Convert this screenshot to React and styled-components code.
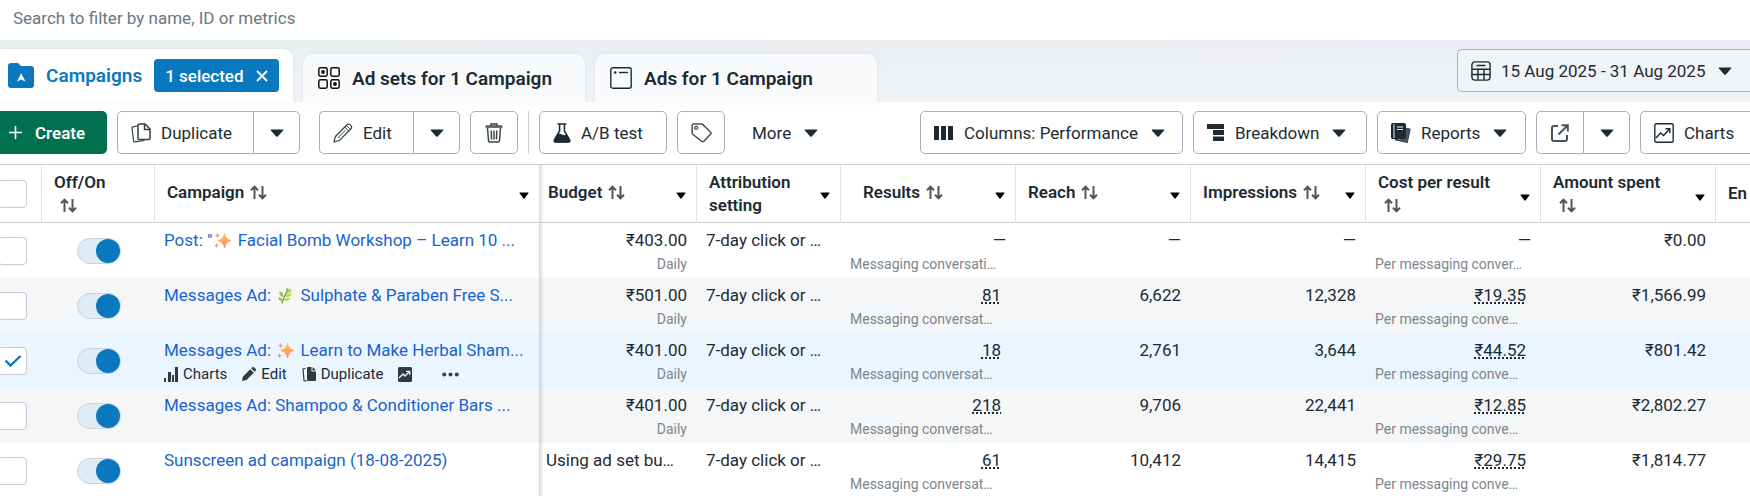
import React, { useState } from "react";
import styled, { createGlobalStyle } from "styled-components";

const GlobalStyle = createGlobalStyle`
  html, body {
    margin: 0;
    padding: 0;
    background-color: #fff;
    color: #1c2b33;
    font-family: Roboto, "Liberation Sans", sans-serif;
    font-size: 17px;
    overflow: hidden;
  }

  *, *::before {
    box-sizing: border-box;
  }

  button, input {
    font: inherit;
    color: inherit;
    margin: 0;
  }

  svg {
    display: block;
    flex: none;
  }
`;

const Page = styled.main`
  margin-left: -2px;
  min-height: 100vh;
  background-color: #fff;
`;

const SearchInput = styled.input`
  display: block;
  width: 100%;
  height: 40px;
  padding: 0 15px 4px;
  border: 0;
  outline: 0;
  background: #fff;

  &::placeholder {
    color: #6b7780;
    opacity: 1;
  }
`;

const TabStrip = styled.header`
  display: flex;
  align-items: flex-end;
  gap: 10px;
  height: 62px;
  background:
    linear-gradient(to bottom, rgba(239, 243, 246, 0), #eff3f6 60%),
    linear-gradient(to right, #e9eef1 20%, #ecedf1 60%, #e9ecf5);
`;

const Tab = styled.div`
  display: flex;
  align-items: center;
  flex: none;
  width: ${(props) => (props.$active ? 295 : 282)}px;
  height: ${(props) => (props.$active ? 53 : 48)}px;
  padding: ${(props) => (props.$active ? "0 10px" : "0 15px")};
  gap: 12px;
  border-radius: ${(props) => (props.$active ? "0 10px 0 0" : "10px 10px 0 0")};
  background-color: ${(props) => (props.$active ? "#fff" : "#f9fafc")};
  color: ${(props) => (props.$active ? "#0a78be" : "#1c2b33")};
  box-shadow: 0 0 6px rgba(28, 43, 51, 0.05);
`;

const TabLink = styled.a`
  display: flex;
  align-items: center;
  gap: 12px;
  color: inherit;
  font-size: 19px;
  font-weight: 600;
  text-decoration: none;
  white-space: nowrap;
`;

const SelectedChip = styled.button`
  display: flex;
  align-items: center;
  justify-content: space-between;
  width: 125px;
  height: 33px;
  padding: 0 11px;
  border: 0;
  border-radius: 4px;
  background-color: #0a78be;
  color: #fff;
  font-weight: 500;
  white-space: nowrap;
`;

const DateButton = styled.button`
  display: flex;
  align-items: center;
  align-self: flex-start;
  flex: none;
  gap: 10px;
  width: 293px;
  height: 43px;
  margin: 9px 0 0 auto;
  padding: 0 13px;
  border: 1px solid #a5b1bc;
  border-right: 0;
  border-radius: 5px 0 0 5px;
  background-color: #f1f4f7;
  font-weight: 450;
  white-space: nowrap;
`;

const Toolbar = styled.div`
  display: flex;
  align-items: flex-start;
  gap: 10px;
  height: 62px;
  padding-top: 9px;
`;

const RightTools = styled.div`
  display: flex;
  gap: 10px;
  margin-left: auto;
`;

const ToolButton = styled.button`
  display: flex;
  align-items: center;
  justify-content: ${(props) => (props.$iconOnly ? "center" : "flex-start")};
  flex: none;
  gap: 10px;
  width: ${(props) => props.$width}px;
  height: 43px;
  padding: 0 ${(props) => (props.$iconOnly ? 0 : 13)}px;
  border: 1px solid ${(props) => (props.$plain ? "transparent" : "#a5b1bc")};
  border-radius: 5px;
  background-color: #fff;
  font-weight: 450;
  white-space: nowrap;
`;

const CreateButton = styled(ToolButton)`
  padding-left: 10px;
  border: 0;
  border-radius: 0 5px 5px 0;
  background-color: #00704f;
  color: #fff;
  font-weight: 600;
  gap: 12px;
`;

const EdgeButton = styled(ToolButton)`
  border-right: 0;
  border-radius: 5px 0 0 5px;
`;

const SplitButton = styled.div`
  display: flex;
  margin-right: ${(props) => (props.$spaced ? 9 : 0)}px;

  ${ToolButton}:first-child {
    border-radius: 5px 0 0 5px;
    border-right: 0;
  }

  ${ToolButton}:last-child {
    border-radius: 0 5px 5px 0;
  }
`;

const Separator = styled.span`
  width: 1px;
  height: 43px;
  background-color: #cbd2d9;
`;

const CaretSlot = styled.span`
  margin-left: 3px;
`;

const Table = styled.table`
  width: 100%;
  table-layout: fixed;
  border-collapse: separate;
  border-spacing: 0;
`;

const Col = styled.col`
  width: ${(props) => (props.$width ? `${props.$width}px` : "auto")};
`;

const HeadCell = styled.th`
  height: 59px;
  padding: 0 10px 0 ${(props) => (props.$indent ? 22 : props.$shadow ? 8 : 12)}px;
  border: 0 solid #cdcfd2;
  border-width: 1px 1px 1px 0;
  border-right-color: #dfe1e4;
  background: ${(props) =>
    props.$shadow ? "linear-gradient(to right, #dcdee0, #fff 4px)" : "#fff"};
  font-weight: 600;
  line-height: 23px;
  text-align: left;
  vertical-align: middle;
  white-space: nowrap;

  &:last-child {
    border-right: 0;
  }
`;

const ControlHead = styled(HeadCell)`
  padding: 0;
`;

const HeadInner = styled.div`
  display: flex;
  align-items: center;
  justify-content: space-between;
`;

const HeadLabel = styled.span`
  display: flex;
  flex-direction: ${(props) => (props.$stacked ? "column" : "row")};
  align-items: ${(props) => (props.$stacked ? "flex-start" : "center")};
  column-gap: 6px;
  padding-bottom: ${(props) => (props.$stacked ? 0 : 2)}px;
`;

const SortSlot = styled.span`
  display: flex;
  align-items: center;
  height: 23px;
  padding-left: ${(props) => (props.$stacked ? 6 : 0)}px;
`;

const HeadCaret = styled.button`
  padding: ${(props) => (props.$low ? 7 : 3)}px 0 0;
  border: 0;
  background: none;
`;

const Row = styled.tr`
  background-color: ${(props) =>
    props.$selected ? "#ebf5ff" : props.$striped ? "#f4f6f8" : "#fff"};
`;

const Cell = styled.td`
  height: 55px;
  padding: 6px 10px 0 ${(props) => props.$left || 9}px;
  overflow: hidden;
  text-align: ${(props) => props.$align || "left"};
  vertical-align: top;
  white-space: nowrap;
  line-height: 22px;
`;

const ControlCell = styled(Cell)`
  padding: 0 0 0 ${(props) => props.$left || 0}px;
  vertical-align: middle;
`;

const CampaignCell = styled(Cell)`
  border-right: 1px solid #d3d6d9;
`;

const BudgetCell = styled(Cell)`
  background: linear-gradient(to right, rgba(28, 43, 51, 0.14), rgba(28, 43, 51, 0) 4px);
`;

const SubText = styled.div`
  margin-top: 3px;
  color: #7b868d;
  font-size: 14px;
  line-height: 20px;
  text-align: ${(props) => props.$align || "left"};
`;

const Metric = styled.span`
  padding-right: 5px;
  text-decoration: underline dotted 2px;
  text-decoration-skip-ink: none;
  text-underline-offset: 1px;
`;

const CampaignLink = styled.a`
  display: flex;
  align-items: center;
  color: #1763cf;
  text-decoration: none;
  white-space: pre;
`;

const EmojiSlot = styled.span`
  display: flex;
  justify-content: center;
  width: 17px;
  margin: 0 2px;
`;

const RowActions = styled.div`
  display: flex;
  align-items: center;
  gap: 15px;
  height: 20px;
  margin-top: 3px;
`;

const RowAction = styled.button`
  display: flex;
  align-items: center;
  gap: 5px;
  padding: 0;
  border: 0;
  background: none;
  font-size: 15px;
  line-height: 20px;
`;

const MoreAction = styled(RowAction)`
  padding-left: 15px;
`;

const CheckLabel = styled.label`
  display: grid;
  width: 29px;
  height: 28px;

  > * {
    grid-area: 1 / 1;
    place-self: center;
  }

  svg {
    pointer-events: none;
    opacity: ${(props) => (props.$checked ? 1 : 0)};
  }
`;

const CheckInput = styled.input`
  appearance: none;
  width: 29px;
  height: 28px;
  border: 1px solid #c3cbd5;
  border-radius: 4px;
  background-color: #fff;
`;

const Switch = styled.input`
  appearance: none;
  display: flex;
  justify-content: flex-end;
  width: 44px;
  height: 26px;
  border: 1px solid #c8d3dc;
  border-radius: 13px;
  background-color: #dfecf6;

  &:not(:checked) {
    justify-content: flex-start;
    background-color: #eef0f2;
  }

  &::before {
    content: "";
    width: 24px;
    height: 24px;
    border-radius: 50%;
    background-color: #0a78be;
  }
`;

/* icons */

const Caret = ({ small }) => (
  <svg width={small ? 10 : 14} height={small ? 7 : 8} viewBox="0 0 14 8" preserveAspectRatio="none">
    <path d="M1.3.5h11.4q1 0 .4.9L8 7.2q-1 1-2 0L.9 1.4Q.3.5 1.3.5Z" fill={small ? "#000" : "#1c2b33"} />
  </svg>
);

const SortIcon = () => (
  <svg width="17" height="15" viewBox="0 0 17 15" fill="none" stroke="#555" strokeWidth="2">
    <path d="M4.5 14V2M1 5.2l3.5-3.5L8 5.2M12.5 1v12M9 9.8l3.5 3.5L16 9.8" />
  </svg>
);

const FolderIcon = () => (
  <svg width="26" height="25" viewBox="0 0 26 25">
    <path d="M3 0h7l3 3h10q3 0 3 3v16q0 3-3 3H3q-3 0-3-3V3q0-3 3-3Z" fill="#0a78be" />
    <path d="M13.2 10.3 17.5 18.4l-4.3-2-4.3 2Z" fill="#fff" />
  </svg>
);

const AdSetsIcon = () => (
  <svg width="22" height="22" viewBox="0 0 22 22" fill="none" stroke="#111" strokeWidth="1.5">
    <rect x=".8" y=".8" width="8.4" height="8.4" rx="1.6" />
    <rect x="12.8" y=".8" width="8.4" height="8.4" rx="1.6" />
    <rect x=".8" y="12.8" width="8.4" height="8.4" rx="1.6" />
    <rect x="12.8" y="12.8" width="8.4" height="8.4" rx="1.6" />
    <circle cx="5" cy="5" r="1.9" fill="#111" stroke="none" />
    <circle cx="17" cy="17" r="1.9" fill="#111" stroke="none" />
  </svg>
);

const AdIcon = () => (
  <svg width="22" height="22" viewBox="0 0 22 22" fill="none" stroke="#1c2b33" strokeWidth="1.4">
    <rect x=".8" y=".8" width="20.4" height="20.4" rx="2" />
    <path d="M9 5.5h9" />
    <circle cx="5.2" cy="5.5" r="1.3" fill="#1c2b33" stroke="none" />
  </svg>
);

const CloseIcon = () => (
  <svg width="12" height="12" viewBox="0 0 12 12" stroke="#fff" strokeWidth="1.8">
    <path d="M1 1l10 10M11 1 1 11" />
  </svg>
);

const CalendarIcon = () => (
  <svg width="20" height="20" viewBox="0 0 20 20" fill="none" stroke="#1c2b33" strokeWidth="1.4">
    <rect x=".9" y=".9" width="18.2" height="18.2" rx="3" />
    <path d="M5.5 4.5h9M1 8.2h18M1 13.5h18M7 8.2V19M13 8.2V19" />
  </svg>
);

const PlusIcon = () => (
  <svg width="15" height="15" viewBox="0 0 15 15" stroke="#fff" strokeWidth="1.6">
    <path d="M7.5 1v13M1 7.5h13" />
  </svg>
);

const DuplicateIcon = () => (
  <svg width="20" height="20" viewBox="0 0 20 20" fill="none" stroke="#2f3d45" strokeWidth="1.5" strokeLinejoin="round">
    <path d="M8.5 1H14l5 5v9.5q0 1-1 1H8q-1 0-1-1V2q0-1 1.5-1Z" />
    <path d="M13.5 1.2V6.5H19" />
    <path d="M6.5 3 2 3.8Q.9 4 1 5l1.6 12.8q.2 1.1 1.3 1L13.5 17.5" strokeWidth="1.2" />
  </svg>
);

const PencilIcon = () => (
  <svg width="20" height="20" viewBox="0 0 20 20" fill="none" stroke="#3d4a51" strokeWidth="1.3" strokeLinejoin="round">
    <path d="m1 19 1.4-5.5L13.8 2q1.9-1.7 3.8.1t.2 3.9L6.5 17.4Z" />
    <path d="m11.8 4 4.2 4.2M13.5 2.4l4.2 4.2M5 14.8 12.5 7.3" strokeWidth="1" />
  </svg>
);

const TrashIcon = () => (
  <svg width="18" height="20" viewBox="0 0 18 20" fill="none" stroke="#3a464d" strokeWidth="1.5">
    <path d="M6 2.8V1h6v1.8M.5 4h17M2.5 5l1 12.5q.1 1.5 1.5 1.5h8q1.4 0 1.5-1.5L15.5 5" />
    <path d="M.8 2.8h16.4" strokeWidth="1" />
    <path d="M6.2 7.5l.3 9M9 7.5v9M11.8 7.5l-.3 9" />
  </svg>
);

const FlaskIcon = () => (
  <svg width="18" height="20" viewBox="0 0 18 20">
    <path d="M4.5 1h9M6.6 1v7L1.5 16.5q-1.1 2.5 1.3 2.5h12.4q2.4 0 1.3-2.5L11.4 8V1" fill="none" stroke="#1c2b33" strokeWidth="1.5" />
    <path d="M4.6 11.2q2.2-1.2 4.4.2t4.6.2L17 17q.8 2.5-1.5 2.5h-13Q.2 19.5 1 17Z" fill="#1c2b33" />
  </svg>
);

const TagIcon = () => (
  <svg width="21" height="20" viewBox="0 0 21 20" fill="none" stroke="#46525a" strokeWidth="1.5" strokeLinejoin="round">
    <path d="M2.5 1h8q.8 0 1.4.6l7.6 7.4q1.1 1.1 0 2.2l-6.6 7.1q-1 1-2.1 0L2 11.5q-.8-.7-.8-1.7V2.3Q1.2 1 2.5 1Z" />
    <circle cx="5.2" cy="4.8" r="1.5" strokeWidth="1.3" />
  </svg>
);

const ColumnsIcon = () => (
  <svg width="20" height="16" viewBox="0 0 20 16" fill="#1c2b33">
    <path d="M0 1h5v14H0zM7 1h5v14H7zM14 1h5v14h-5z" />
  </svg>
);

const BreakdownIcon = () => (
  <svg width="18" height="18" viewBox="0 0 18 18" fill="#1c2b33">
    <path d="M0 0h17v5H0zM6 6h11v5H6zM6 12.5h11V17H6z" />
  </svg>
);

const ReportsIcon = () => (
  <svg width="20" height="20" viewBox="0 0 20 20">
    <path d="M2.5.5V16M4 16.5 16 19l2.8-12.5-3-.9" fill="none" stroke="#1c2b33" strokeWidth="1.6" />
    <path d="M14 4.5 19 6l-2.6 13.5-8-2Z" fill="#4b575e" />
    <path d="M1.5 0H13q2 0 2 2v12q0 2-2 2H1.5Q0 16 0 14V2Q0 0 1.5 0Z" fill="#1c2b33" />
    <path d="M3 1v14" stroke="#fff" strokeWidth=".9" />
    <path d="M6 4h6M6 6.5h6" stroke="#fff" strokeWidth="1.2" />
  </svg>
);

const ExportIcon = () => (
  <svg width="18" height="18" viewBox="0 0 18 18" fill="none" stroke="#46525a" strokeWidth="2">
    <path d="M7 2H3Q1 2 1 4v11q0 2 2 2h11q2 0 2-2v-4" />
    <path d="M10.5 1.2h6.3v6.3M16.5 1.5l-9 9" />
  </svg>
);

const ChartIcon = () => (
  <svg width="20" height="20" viewBox="0 0 20 20" fill="none" stroke="#1c2b33" strokeWidth="1.4">
    <rect x=".8" y=".8" width="18.4" height="18.4" rx="1.5" />
    <path d="m2 15 4.500-5 3 2.500L15.500 6M11.500 5.800h4.300V10" />
  </svg>
);

const CheckIcon = () => (
  <svg width="18" height="14" viewBox="0 0 18 14" fill="none" stroke="#0a78be" strokeWidth="2.4">
    <path d="m1.5 6.5 5 5L16.5 2" />
  </svg>
);

const BarsIcon = () => (
  <svg width="14" height="15" viewBox="0 0 14 15" fill="#33393e">
    <path d="M0 11h2v4H0zM4 5h3v10H4zM8 8h2v7H8zM11 0h3v15h-3z" />
  </svg>
);

const SolidPencilIcon = () => (
  <svg width="14" height="14" viewBox="0 0 14 14" fill="#33393e">
    <path d="m0 14 1-4.500L8.300 2.200 11.800 5.700 4.500 13ZM9.200 1.300 10 .5q1.200-1 2.300 0l1.200 1.200q1 1.100 0 2.300l-.8.800Z" />
  </svg>
);

const SolidDuplicateIcon = () => (
  <svg width="14" height="15" viewBox="0 0 14 15">
    <path d="M3.500 1.500 1 2l1 11.500 2.500.7" fill="none" stroke="#33393e" strokeWidth="1.2" />
    <path d="M6 0h3.500v4.500H14V13q0 1-1 1H6q-1 0-1-1V1q0-1 1-1ZM10.500 0 14 3.500h-3.500Z" fill="#33393e" />
  </svg>
);

const SolidChartIcon = () => (
  <svg width="14" height="15" viewBox="0 0 14 15">
    <rect width="14" height="15" rx="1.5" fill="#33393e" />
    <path d="m1 11 4-4 2 2 4.500-4.500M8 4.300h3.700V8" fill="none" stroke="#ebf5ff" strokeWidth="1.3" />
  </svg>
);

const DotsIcon = () => (
  <svg width="17" height="5" viewBox="0 0 17 5" fill="#33434d">
    <circle cx="2.2" cy="2.5" r="2" />
    <circle cx="8.5" cy="2.5" r="2" />
    <circle cx="14.8" cy="2.5" r="2" />
  </svg>
);

const SparklesIcon = () => (
  <svg width="17" height="17" viewBox="0 0 17 17" role="img" aria-label="✨">
    <defs>
      <linearGradient id="spark" x1="0" y1="0" x2="0" y2="1">
        <stop offset="0" stopColor="#ffc24a" />
        <stop offset="1" stopColor="#ff8a6b" />
      </linearGradient>
    </defs>
    <path d="M10.500 1.500q.9 6 6.500 7-5.600 1-6.500 7.500-.9-6.500-6.500-7.500 5.600-1 6.500-7Z" fill="url(#spark)" stroke="url(#spark)" />
    <path d="M3.500.5q.3 2.500 2.500 3-2.200.5-2.500 3Q3.200 4 1 3.500q2.200-.5 2.500-3ZM2.500 11q.3 2 2.300 2.500-2 .5-2.300 2.500-.3-2-2.300-2.500Q2.200 13 2.500 11Z" fill="#fb9a5c" />
  </svg>
);

const HerbIcon = () => (
  <svg width="15" height="17" viewBox="0 0 15 17" role="img" aria-label="🌿">
    <path d="M4 16.500Q5.500 9 10.500 3" fill="none" stroke="#6d8f35" strokeWidth="1.2" />
    <path d="M8.500 6Q7 3 9.500.5q2.500 2-1 5.500ZM5 10Q1 9 1.500 4.500q4.500.5 3.500 5.500ZM4.500 14Q1 14.500.2 10.500q4-.5 4.300 3.500Z" fill="#8cc152" />
    <path d="M9 6.500q0-4 4.500-4.500.5 4-4.500 4.500ZM7.500 10q.5-4 6.500-3.500-1.500 4-6.500 3.500ZM5.500 13.500q2-3.500 7-2-2 3.500-7 2Z" fill="#b5d645" />
  </svg>
);

const columns = [
  { label: "Campaign", sort: true },
  { label: "Budget", sort: true, shadow: true },
  { label: "Attribution", second: "setting" },
  { label: "Results", sort: true, indent: true },
  { label: "Reach", sort: true },
  { label: "Impressions", sort: true },
  { label: "Cost per result", sort: true, stacked: true },
  { label: "Amount spent", sort: true, stacked: true },
];

const campaigns = [
  { before: 'Post: "', icon: "sparkles", after: " Facial Bomb Workshop – Learn 10 ...", budget: "₹403.00", results: "—", resultsSub: "Messaging conversati…", reach: "—", impressions: "—", cost: "—", costSub: "Per messaging conver…", spent: "₹0.00" },
  { before: "Messages Ad: ", icon: "herb", after: " Sulphate & Paraben Free S...", budget: "₹501.00", results: "81", resultsSub: "Messaging conversat…", reach: "6,622", impressions: "12,328", cost: "₹19.35", costSub: "Per messaging conve…", spent: "₹1,566.99" },
  { before: "Messages Ad: ", icon: "sparkles", after: " Learn to Make Herbal Sham...", budget: "₹401.00", results: "18", resultsSub: "Messaging conversat…", reach: "2,761", impressions: "3,644", cost: "₹44.52", costSub: "Per messaging conve…", spent: "₹801.42", selected: true },
  { before: "Messages Ad: Shampoo & Conditioner Bars ...", budget: "₹401.00", results: "218", resultsSub: "Messaging conversat…", reach: "9,706", impressions: "22,441", cost: "₹12.85", costSub: "Per messaging conve…", spent: "₹2,802.27" },
  { before: "Sunscreen ad campaign (18-08-2025)", budget: null, results: "61", resultsSub: "Messaging conversat…", reach: "10,412", impressions: "14,415", cost: "₹29.75", costSub: "Per messaging conve…", spent: "₹1,814.77" },
];

function Check({ label, checked, onChange }) {
  return (
    <CheckLabel $checked={checked}>
      <CheckInput type="checkbox" aria-label={label} checked={checked} onChange={onChange} />
      <CheckIcon />
    </CheckLabel>
  );
}

function HeaderCell({ column }) {
  const { label, second, sort, stacked, indent, shadow } = column;
  return (
    <HeadCell $indent={indent} $shadow={shadow}>
      <HeadInner>
        <HeadLabel $stacked={stacked || second}>
          <span>{label}</span>
          {second && <span>{second}</span>}
          {sort && <SortSlot $stacked={stacked}><SortIcon /></SortSlot>}
        </HeadLabel>
        <HeadCaret $low={stacked} aria-label={`${label} options`}><Caret small /></HeadCaret>
      </HeadInner>
    </HeadCell>
  );
}

function CampaignRow({ item, index }) {
  const [selected, setSelected] = useState(Boolean(item.selected));
  const [on, setOn] = useState(true);
  const hasResults = item.results !== "—";

  return (
    <Row $selected={selected} $striped={index % 2 === 1}>
      <ControlCell>
        <Check label={`Select campaign ${index + 1}`} checked={selected} onChange={() => setSelected(!selected)} />
      </ControlCell>
      <ControlCell $left={35}>
        <Switch type="checkbox" role="switch" aria-label="Off/On" checked={on} onChange={() => setOn(!on)} />
      </ControlCell>
      <CampaignCell>
        <CampaignLink href="#campaign">
          <span>{item.before}</span>
          {item.icon && (
            <EmojiSlot>{item.icon === "herb" ? <HerbIcon /> : <SparklesIcon />}</EmojiSlot>
          )}
          {item.after && <span>{item.after}</span>}
        </CampaignLink>
        {item.selected && (
          <RowActions>
            <RowAction><BarsIcon />Charts</RowAction>
            <RowAction><SolidPencilIcon />Edit</RowAction>
            <RowAction><SolidDuplicateIcon />Duplicate</RowAction>
            <RowAction aria-label="View trends"><SolidChartIcon /></RowAction>
            <MoreAction aria-label="More actions"><DotsIcon /></MoreAction>
          </RowActions>
        )}
      </CampaignCell>
      {item.budget ? (
        <BudgetCell $align="right">
          {item.budget}
          <SubText $align="right">Daily</SubText>
        </BudgetCell>
      ) : (
        <BudgetCell $left={6}>Using ad set bu…</BudgetCell>
      )}
      <Cell>7-day click or …</Cell>
      <Cell $align="right">
        {hasResults ? <Metric>{item.results}</Metric> : item.results}
        <SubText>{item.resultsSub}</SubText>
      </Cell>
      <Cell $align="right">{item.reach}</Cell>
      <Cell $align="right">{item.impressions}</Cell>
      <Cell $align="right">
        {hasResults ? <Metric>{item.cost}</Metric> : item.cost}
        <SubText>{item.costSub}</SubText>
      </Cell>
      <Cell $align="right">{item.spent}</Cell>
      <Cell />
    </Row>
  );
}

function App() {
  const [allSelected, setAllSelected] = useState(false);

  return (
    <Page>
      <GlobalStyle />
      <SearchInput type="text" aria-label="Search" placeholder="Search to filter by name, ID or metrics" />

      <TabStrip>
        <Tab $active>
          <TabLink href="#campaigns"><FolderIcon />Campaigns</TabLink>
          <SelectedChip>1 selected<CloseIcon /></SelectedChip>
        </Tab>
        <Tab>
          <TabLink href="#adsets"><AdSetsIcon />Ad sets for 1 Campaign</TabLink>
        </Tab>
        <Tab>
          <TabLink href="#ads"><AdIcon />Ads for 1 Campaign</TabLink>
        </Tab>
        <DateButton>
          <CalendarIcon />
          15 Aug 2025 - 31 Aug 2025
          <CaretSlot><Caret /></CaretSlot>
        </DateButton>
      </TabStrip>

      <Toolbar>
        <CreateButton $width={109}><PlusIcon />Create</CreateButton>
        <SplitButton $spaced>
          <ToolButton $width={136}><DuplicateIcon />Duplicate</ToolButton>
          <ToolButton $width={47} $iconOnly aria-label="Duplicate options"><Caret /></ToolButton>
        </SplitButton>
        <SplitButton>
          <ToolButton $width={94}><PencilIcon />Edit</ToolButton>
          <ToolButton $width={47} $iconOnly aria-label="Edit options"><Caret /></ToolButton>
        </SplitButton>
        <ToolButton $width={48} $iconOnly aria-label="Delete"><TrashIcon /></ToolButton>
        <Separator />
        <ToolButton $width={128}><FlaskIcon />A/B test</ToolButton>
        <ToolButton $width={48} $iconOnly aria-label="Tags"><TagIcon /></ToolButton>
        <ToolButton $width={100} $plain>
          <CaretSlot>More</CaretSlot>
          <CaretSlot><Caret /></CaretSlot>
        </ToolButton>

        <RightTools>
          <ToolButton $width={263}>
            <ColumnsIcon />
            Columns: Performance
            <CaretSlot><Caret /></CaretSlot>
          </ToolButton>
          <ToolButton $width={174}>
            <BreakdownIcon />
            Breakdown
            <CaretSlot><Caret /></CaretSlot>
          </ToolButton>
          <ToolButton $width={149}>
            <ReportsIcon />
            Reports
            <CaretSlot><Caret /></CaretSlot>
          </ToolButton>
          <SplitButton>
            <ToolButton $width={47} $iconOnly aria-label="Export"><ExportIcon /></ToolButton>
            <ToolButton $width={47} $iconOnly aria-label="Export options"><Caret /></ToolButton>
          </SplitButton>
          <EdgeButton $width={110}><ChartIcon />Charts</EdgeButton>
        </RightTools>
      </Toolbar>

      <Table>
        <colgroup>
          <Col $width={44} />
          <Col $width={113} />
          <Col $width={385} />
          <Col $width={157} />
          <Col $width={144} />
          <Col $width={175} />
          <Col $width={175} />
          <Col $width={175} />
          <Col $width={175} />
          <Col $width={175} />
          <Col />
        </colgroup>
        <thead>
          <tr>
            <ControlHead>
              <Check label="Select all" checked={allSelected} onChange={() => setAllSelected(!allSelected)} />
            </ControlHead>
            <HeadCell>
              <HeadLabel $stacked>
                Off/On
                <SortSlot $stacked><SortIcon /></SortSlot>
              </HeadLabel>
            </HeadCell>
            {columns.map((column) => (
              <HeaderCell key={column.label} column={column} />
            ))}
            <HeadCell>En</HeadCell>
          </tr>
        </thead>
        <tbody>
          {campaigns.map((item, index) => (
            <CampaignRow key={item.before + index} item={item} index={index} />
          ))}
        </tbody>
      </Table>
    </Page>
  );
}

export default App;
